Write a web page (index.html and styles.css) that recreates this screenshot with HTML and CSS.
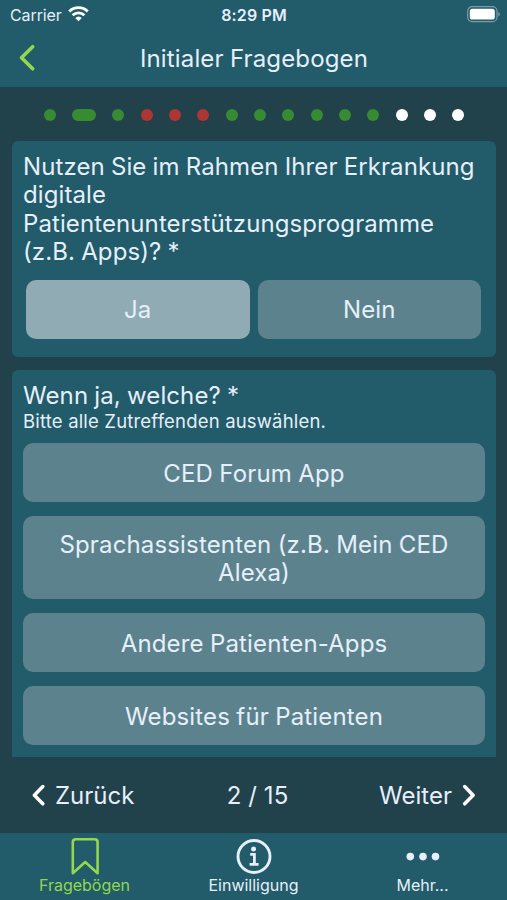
FILE: index.html
```html
<!DOCTYPE html>
<html lang="de">
<head>
<meta charset="utf-8">
<title>Initialer Fragebogen</title>
<link rel="stylesheet" href="styles.css">
</head>
<body>
<div class="app">
  <header class="header">
    <div class="status">
      <div class="carrier"><span>Carrier</span>
        <svg class="wifi" viewBox="0 0 20 15" width="21" height="15.75"><path d="M10 14.6 6.9 11.5a4.5 4.5 0 0 1 6.2 0Z" fill="#fff"/><path d="M4.4 8.8a8 8 0 0 1 11.2 0M1.2 5.2a12.6 12.6 0 0 1 17.6 0" fill="none" stroke="#fff" stroke-width="2.7"/></svg>
      </div>
      <span class="clock">8:29 PM</span>
      <svg class="battery" viewBox="0 0 33 17" width="33" height="17"><rect x=".7" y=".7" width="29.3" height="15" rx="4.5" fill="none" stroke="#7d9ca7" stroke-width="1.2"/><rect x="2.8" y="2.8" width="25" height="10.8" rx="2.6" fill="#fff"/><path d="M31.3 5.8q1.5 1 1.5 2.4t-1.5 2.4Z" fill="#7d9ca7"/></svg>
    </div>
    <div class="titlebar">
      <svg class="back" viewBox="0 0 18 28" width="18" height="28"><path d="M14.7 2.7 3.5 13.8l11.2 11" fill="none" stroke="#91d84f" stroke-width="3.6" stroke-linecap="round" stroke-linejoin="round"/></svg>
      <h1 class="title">Initialer Fragebogen</h1>
    </div>
  </header>

  <div class="progress">
    <i class="dot"></i><i class="dot current"></i><i class="dot"></i><i class="dot missing"></i><i class="dot missing"></i><i class="dot missing"></i><i class="dot"></i><i class="dot"></i><i class="dot"></i><i class="dot"></i><i class="dot"></i><i class="dot"></i><i class="dot open"></i><i class="dot open"></i><i class="dot open"></i>
  </div>

  <main class="content">
    <section class="card card-single">
      <h2 class="question">Nutzen Sie im Rahmen Ihrer Erkrankung digitale Patientenunterstützungsprogramme (z.B. Apps)? *</h2>
      <div class="pair">
        <button class="option selected">Ja</button>
        <button class="option">Nein</button>
      </div>
    </section>
    <section class="card card-multi">
      <h2 class="question">Wenn ja, welche? *</h2>
      <p class="hint">Bitte alle Zutreffenden auswählen.</p>
      <div class="list">
        <button class="option">CED Forum App</button>
        <button class="option tall">Sprachassistenten (z.B. Mein CED Alexa)</button>
        <button class="option">Andere Patienten-Apps</button>
        <button class="option">Websites für Patienten</button>
      </div>
    </section>
  </main>

  <nav class="pager">
    <div class="step prev"><svg viewBox="0 0 14 22" width="14" height="22"><path d="m11.8 2.5-8.4 8.7 8.4 8.6" fill="none" stroke="#fff" stroke-width="3.5" stroke-linecap="round" stroke-linejoin="round"/></svg><span>Zurück</span></div>
    <span class="count">2 / 15</span>
    <div class="step next"><span>Weiter</span><svg viewBox="0 0 14 22" width="14" height="22"><path d="m2.7 2.5 8.4 8.7-8.4 8.6" fill="none" stroke="#fff" stroke-width="3.5" stroke-linecap="round" stroke-linejoin="round"/></svg></div>
  </nav>

  <footer class="tabs">
    <div class="tab active"><svg viewBox="0 0 40 40" width="40" height="40"><path d="M7.8 37.2V6.2Q7.8 3.3 10.8 3.3H29.6Q32.6 3.3 32.6 6.2V37.2L20.2 26Z" fill="none" stroke="currentColor" stroke-width="2.6" stroke-linejoin="round"/></svg><span>Fragebögen</span></div>
    <div class="tab"><svg viewBox="0 0 40 40" width="40" height="40"><circle cx="20" cy="20.5" r="16" fill="none" stroke="currentColor" stroke-width="2.9"/><circle cx="19.6" cy="12.9" r="2.5" fill="currentColor"/><path d="M16.2 18.3h4.2v10M15.6 28.3h9" fill="none" stroke="currentColor" stroke-width="2.8"/></svg><span>Einwilligung</span></div>
    <div class="tab"><svg viewBox="0 0 40 40" width="40" height="40"><circle cx="7.3" cy="20.6" r="3.8" fill="currentColor"/><circle cx="20" cy="20.6" r="3.8" fill="currentColor"/><circle cx="32.5" cy="20.6" r="3.8" fill="currentColor"/></svg><span>Mehr...</span></div>
  </footer>
</div>
</body>
</html>
```
FILE: styles.css
```css
* { box-sizing: border-box; }
body {
  margin: 0;
  background: #21414b;
  color: #e6effa;
  font-family: Inter, "Liberation Sans", sans-serif;
}
h1, h2, p { margin: 0; font-weight: 400; }
svg { display: block; flex: none; }
.app { width: 507px; height: 900px; display: flex; flex-direction: column; overflow: hidden; }

.header { height: 87px; flex: none; background: #225b69; }
.status { height: 30px; display: grid; grid-template-columns: 1fr auto 1fr; align-items: center; padding: 0 7px 0 10px; font-size: 16px; }
.carrier { display: flex; align-items: center; gap: 6px; letter-spacing: -0.1px; }
.wifi { margin-top: -2px; }
.clock { font-weight: 600; font-size: 16px; letter-spacing: 0.15px; margin-left: -2px; }
.battery { justify-self: end; margin-top: -2px; }
.titlebar { height: 57px; display: grid; grid-template-columns: 48px 1fr 48px; align-items: center; padding-left: 1px; }
.back { margin: -2px 0 0 17px; }
.title { text-align: center; font-size: 24px; letter-spacing: 0.15px; word-spacing: -0.7px; margin-top: -1px; }

.progress { height: 54px; flex: none; display: flex; justify-content: center; align-items: center; gap: 16.33px; padding: 2px 0 0 1px; }
.dot { width: 12px; height: 12px; border-radius: 6px; background: #368b33; }
.dot.current { width: 24px; }
.dot.missing { background: #ae3536; }
.dot.open { background: #fff; }

.content { height: 616px; flex: none; padding: 0 11px 0 12px; display: flex; flex-direction: column; gap: 13.5px; overflow: hidden; }
.card { background: #225b69; border-radius: 6px; padding: 12px 11px 0; flex: none; }
.card-single { height: 215.5px; }
.card-multi { height: 387px; border-radius: 6px 6px 0 0; }
.question { font-size: 24px; line-height: 28.3px; letter-spacing: 0.1px; word-spacing: -0.7px; }
.hint { font-size: 18.5px; line-height: 22px; letter-spacing: 0.18px; }
.pair { display: grid; grid-template-columns: 1fr 1fr; gap: 8px; padding: 0 4px 0 3px; margin-top: 13.5px; }
.list { display: flex; flex-direction: column; gap: 14px; margin-top: 11px; }
.option {
  height: 59px; border: 0; border-radius: 10px; padding: 2px 30px 0;
  background: #5c838d; color: inherit;
  font: 24px/28.3px Inter, "Liberation Sans", sans-serif; letter-spacing: 0.15px; word-spacing: -0.6px;
}
.option.selected { background: #90abb4; }
.option.tall { height: 83px; }

.pager { height: 76px; flex: none; display: grid; grid-template-columns: 1fr auto 1fr; align-items: center; padding: 0 31px; font-size: 24px; }
.step { display: flex; align-items: center; gap: 10px; }
.count { margin-left: 7px; margin-right: -1px; letter-spacing: 0.1px; }
.next { justify-content: flex-end; }

.tabs { height: 67px; flex: none; background: #225b69; display: grid; grid-template-columns: repeat(3, 1fr); }
.tab { display: flex; flex-direction: column; align-items: center; padding-top: 3px; font-size: 16px; line-height: 18px; }
.active { color: #91d84f; }
```
